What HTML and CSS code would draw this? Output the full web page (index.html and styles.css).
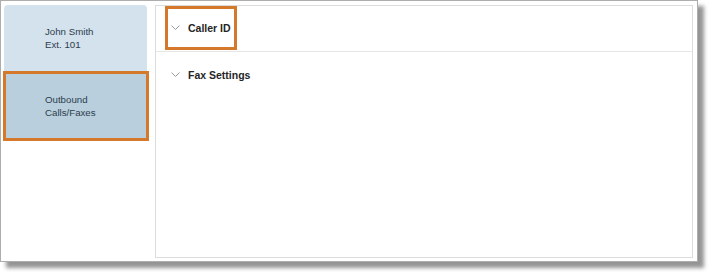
FILE: index.html
```html
<!DOCTYPE html>
<html>
<head>
<meta charset="utf-8">
<link rel="stylesheet" href="styles.css">
</head>
<body>
<div class="frame">
  <nav class="sidebar">
    <div class="nav-item nav-first">
      <span>John Smith</span>
      <span>Ext. 101</span>
    </div>
    <div class="nav-item nav-selected">
      <span>Outbound</span>
      <span>Calls/Faxes</span>
    </div>
  </nav>
  <main class="panel">
    <div class="row row-divided">
      <div class="header header-highlight">
        <svg class="chev" width="9" height="5" viewBox="0 0 9 5"><polyline points="0.5,0.5 4.5,4.5 8.5,0.5" fill="none" stroke="#9a9a9a" stroke-width="1"/></svg>
        <span class="title">Caller ID</span>
      </div>
    </div>
    <div class="row">
      <div class="header">
        <svg class="chev" width="9" height="5" viewBox="0 0 9 5"><polyline points="0.5,0.5 4.5,4.5 8.5,0.5" fill="none" stroke="#9a9a9a" stroke-width="1"/></svg>
        <span class="title">Fax Settings</span>
      </div>
    </div>
  </main>
</div>
</body>
</html>
```
FILE: styles.css
```css
html, body {
  margin: 0;
  padding: 0;
  background: #ffffff;
}
body {
  width: 711px;
  height: 274px;
  overflow: hidden;
  font-family: "Liberation Sans", Arial, sans-serif;
}
.frame {
  box-sizing: border-box;
  width: 698px;
  height: 262px;
  border: 1px solid #adadad;
  background: #ffffff;
  padding: 4px 4px 3px 3px;
  display: flex;
  gap: 8px;
  box-shadow: 6px 6px 4px rgba(0, 0, 0, 0.42);
}
.sidebar {
  width: 143px;
  flex: none;
  display: flex;
  flex-direction: column;
}
.nav-item {
  box-sizing: border-box;
  display: flex;
  flex-direction: column;
  justify-content: center;
  padding-left: 41px;
  font-size: 9.7px;
  line-height: 13.5px;
  color: #2c3d4c;
}
.nav-first {
  height: 66px;
  background: #d3e2ec;
  border-radius: 4px 4px 0 0;
}
.nav-selected {
  height: 70px;
  margin-left: -1px;
  margin-right: -2px;
  background: #b9cfdd;
  border: 3px solid #d4792b;
  padding-left: 39px;
}
.panel {
  flex: 1;
  border: 1px solid #dcdcdc;
  display: flex;
  flex-direction: column;
}
.row {
  height: 45px;
  padding-left: 9px;
  display: flex;
}
.row-divided {
  height: 45px;
  border-bottom: 1px solid #e6e6e6;
}
.header {
  box-sizing: border-box;
  height: 45px;
  display: flex;
  align-items: center;
  gap: 8px;
  padding: 0 3px 0 3px;
  border: 3px solid transparent;
}
.header-highlight {
  border-color: #d4792b;
  height: 44px;
  padding-bottom: 1px;
}
.chev {
  display: block;
  flex: none;
}
.title {
  font-size: 10.5px;
  font-weight: bold;
  color: #252525;
}
```
